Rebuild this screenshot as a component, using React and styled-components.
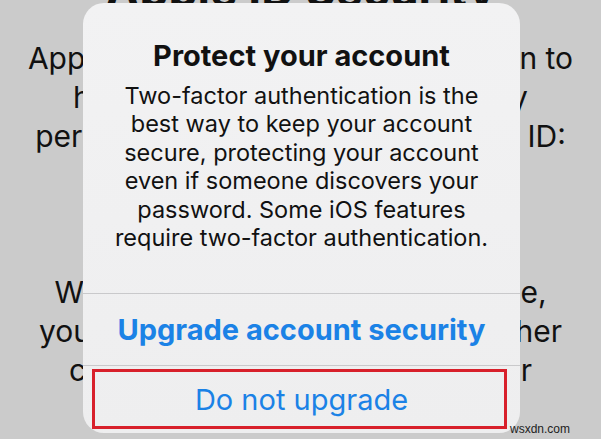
import React from "react";
import styled, { createGlobalStyle } from "styled-components";

const GlobalStyle = createGlobalStyle`
  html, body {
    margin: 0;
    padding: 0;
  }
  body {
    background: #cbcbcb;
    font-family: Inter, "Noto Sans", sans-serif;
    overflow: hidden;
  }
`;

const Screen = styled.div`
  position: relative;
  width: 601px;
  height: 439px;
  overflow: hidden;
  background: #cbcbcb;
`;

const Page = styled.div`
  text-align: center;
  color: #111;
`;

const PageTitle = styled.h1`
  margin: -33px 0 0;
  font-size: 46px;
  line-height: 46px;
  font-weight: 700;
  white-space: nowrap;
`;

const PageText = styled.p`
  margin: ${(p) => p.$gap}px 0 0;
  font-size: 30px;
  line-height: 39px;
  font-weight: 400;
  white-space: nowrap;
`;

const Alert = styled.div`
  position: absolute;
  left: 83px;
  top: 3px;
  width: 437px;
  height: 430px;
  border-radius: 21px;
  background: linear-gradient(#f2f2f3, #eeeeef);
  display: flex;
  flex-direction: column;
  overflow: hidden;
`;

const AlertBody = styled.div`
  padding: 35px 8px 41px;
  text-align: center;
  color: #111;
`;

const AlertTitle = styled.h2`
  margin: 0;
  font-size: 29px;
  line-height: 35px;
  font-weight: 700;
`;

const AlertMessage = styled.p`
  margin: 9px 0 0;
  font-size: 23.5px;
  line-height: 28.4px;
  font-weight: 400;
  white-space: nowrap;
`;

const ActionButton = styled.button`
  position: relative;
  flex: ${(p) => (p.$last ? "1" : "0 0 72px")};
  display: flex;
  align-items: center;
  justify-content: center;
  border: 0;
  border-top: 1px solid #c9c9cb;
  background: transparent;
  color: #1b82e6;
  font-family: inherit;
  font-size: 29px;
  font-weight: ${(p) => (p.$bold ? 700 : 400)};
  padding: 0;
  cursor: pointer;

  ${(p) =>
    p.$marked &&
    `
    &::after {
      content: "";
      position: absolute;
      left: 9px;
      right: 13px;
      top: 3px;
      bottom: 4px;
      border: 3px solid #d8202b;
    }
  `}
`;

const Watermark = styled.span`
  position: absolute;
  right: 31px;
  bottom: 3px;
  font-family: "Liberation Sans", Arial, sans-serif;
  font-size: 12px;
  color: #222;
`;

export default function App() {
  return (
    <>
      <GlobalStyle />
      <Screen>
        <Page>
          <PageTitle>Apple ID Security</PageTitle>
          <PageText $gap={26}>
            Apple uses two-factor authorization to
            <br />
            help keep your data and privacy
            <br />
            personal data linked to your Apple ID:
          </PageText>
          <PageText $gap={117}>
            When you sign in on a new device,
            <br />
            you'll need a code shown on another
            <br />
            code sent to your phone number
          </PageText>
        </Page>

        <Alert>
          <AlertBody>
            <AlertTitle>Protect your account</AlertTitle>
            <AlertMessage>
              Two-factor authentication is the
              <br />
              best way to keep your account
              <br />
              secure, protecting your account
              <br />
              even if someone discovers your
              <br />
              password. Some iOS features
              <br />
              require two-factor authentication.
            </AlertMessage>
          </AlertBody>
          <ActionButton $bold>Upgrade account security</ActionButton>
          <ActionButton $last $marked>
            Do not upgrade
          </ActionButton>
        </Alert>

        <Watermark>wsxdn.com</Watermark>
      </Screen>
    </>
  );
}
